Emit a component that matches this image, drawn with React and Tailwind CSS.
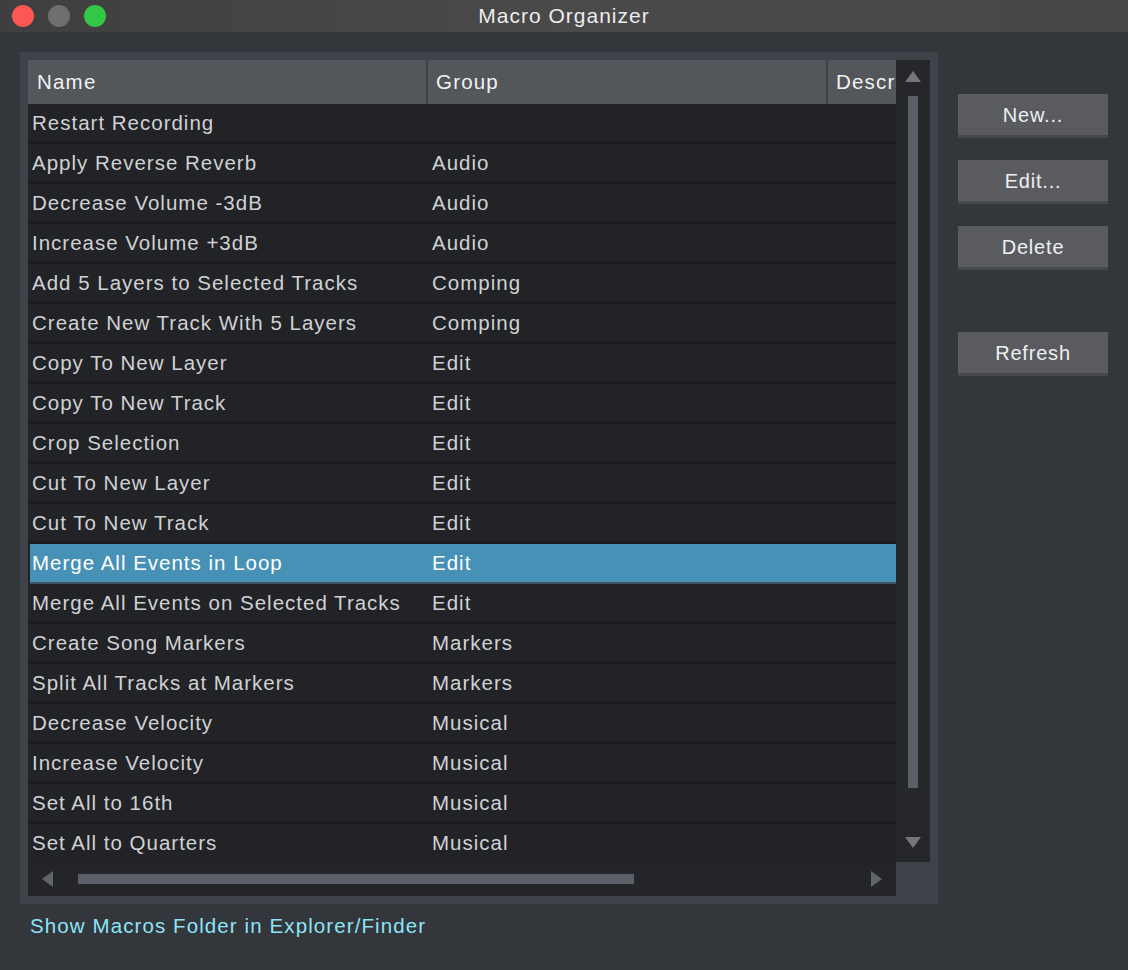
import React from "react";

const macros = [
  ["Restart Recording", ""],
  ["Apply Reverse Reverb", "Audio"],
  ["Decrease Volume -3dB", "Audio"],
  ["Increase Volume +3dB", "Audio"],
  ["Add 5 Layers to Selected Tracks", "Comping"],
  ["Create New Track With 5 Layers", "Comping"],
  ["Copy To New Layer", "Edit"],
  ["Copy To New Track", "Edit"],
  ["Crop Selection", "Edit"],
  ["Cut To New Layer", "Edit"],
  ["Cut To New Track", "Edit"],
  ["Merge All Events in Loop", "Edit"],
  ["Merge All Events on Selected Tracks", "Edit"],
  ["Create Song Markers", "Markers"],
  ["Split All Tracks at Markers", "Markers"],
  ["Decrease Velocity", "Musical"],
  ["Increase Velocity", "Musical"],
  ["Set All to 16th", "Musical"],
  ["Set All to Quarters", "Musical"],
];

function SideButton({ label, className = "" }) {
  return (
    <button
      className={`w-[150px] h-[44px] bg-[#5a5b5e] border-b-[3px] border-[#47484b] text-[20px] tracking-[0.8px] text-[#eef0f4] leading-none ${className}`}
    >
      {label}
    </button>
  );
}

export default function App() {
  const selected = "Merge All Events in Loop";

  return (
    <div
      className="w-[1128px] h-[970px] bg-[#33363b] flex flex-col overflow-hidden"
      style={{ fontFamily: '"Liberation Sans", Arial, sans-serif' }}
    >
      {/* title bar */}
      <div className="h-[32px] bg-gradient-to-r from-[#3f3f3f] via-[#4a4a4a] to-[#474747] flex items-center relative shrink-0">
        <div className="flex items-center gap-[14px] pl-[12px]">
          <span className="w-[22px] h-[22px] rounded-full bg-[#fc5753]" />
          <span className="w-[22px] h-[22px] rounded-full bg-[#6f6f6f]" />
          <span className="w-[22px] h-[22px] rounded-full bg-[#33c748]" />
        </div>
        <div className="absolute inset-0 flex items-center justify-center text-[21px] tracking-[1px] text-[#ececec] pointer-events-none">
          Macro Organizer
        </div>
      </div>

      <div className="flex pt-[20px] pl-[20px] gap-[20px]">
        <div className="flex flex-col">
          {/* panel */}
          <div className="w-[918px] h-[852px] bg-[#3f4248] p-[8px] flex">
            <div className="w-[868px] flex flex-col">
              {/* header */}
              <div className="h-[44px] bg-[#53565b] flex text-[20.5px] tracking-[1.2px] text-[#f2f2f2] shrink-0">
                <div className="w-[400px] flex items-center pl-[9px] border-r-2 border-[#3e4045]">Name</div>
                <div className="w-[400px] flex items-center pl-[8px] border-r-2 border-[#3e4045]">Group</div>
                <div className="flex-1 flex items-center pl-[8px] overflow-hidden whitespace-nowrap">Description</div>
              </div>
              {/* body */}
              <div className="h-[758px] bg-[#212326] overflow-hidden">
                {macros.map(([name, group]) => {
                  const sel = name === selected;
                  return (
                    <div
                      key={name}
                      className={`h-[40px] flex items-center text-[20.5px] tracking-[1px] border-b-2 ${
                        sel
                          ? "bg-[#4791b6] text-white border-[#3f5766] ml-[2px]"
                          : "text-[#d0d1d3] border-[#1a1b1e]"
                      }`}
                    >
                      <div className={`${sel ? "w-[398px] pl-[2px]" : "w-[400px] pl-[4px]"} whitespace-nowrap`}>{name}</div>
                      <div className="pl-[4px]">{group}</div>
                    </div>
                  );
                })}
              </div>
              {/* horizontal scrollbar */}
              <div className="h-[34px] bg-[#242528] flex items-center px-[14px] shrink-0">
                <svg width="12" height="16" viewBox="0 0 12 16">
                  <polygon points="11,0 11,16 0,8" fill="#62646c" />
                </svg>
                <div className="ml-[24px] w-[556px] h-[10px] bg-[#5d5f68]" />
                <div className="flex-1" />
                <svg width="12" height="16" viewBox="0 0 12 16">
                  <polygon points="1,0 1,16 12,8" fill="#62646c" />
                </svg>
              </div>
            </div>
            {/* vertical scrollbar */}
            <div className="w-[34px] h-[802px] bg-[#26272a] flex flex-col items-center">
              <svg className="mt-[10px]" width="16" height="13" viewBox="0 0 16 13">
                <polygon points="0,12 16,12 8,1" fill="#75767a" />
              </svg>
              <div className="mt-[13px] w-[10px] h-[692px] bg-[#5d5f68]" />
              <div className="flex-1" />
              <svg className="mb-[13px]" width="16" height="13" viewBox="0 0 16 13">
                <polygon points="0,1 16,1 8,12" fill="#75767a" />
              </svg>
            </div>
          </div>
          <div className="pl-[10px] pt-[10px] text-[20.5px] tracking-[1.1px] text-[#8ee4f7] leading-[24px]">
            Show Macros Folder in Explorer/Finder
          </div>
        </div>

        {/* side buttons */}
        <div className="flex flex-col pt-[42px]">
          <SideButton label="New..." />
          <SideButton label="Edit..." className="mt-[22px]" />
          <SideButton label="Delete" className="mt-[22px]" />
          <SideButton label="Refresh" className="mt-[62px]" />
        </div>
      </div>
    </div>
  );
}
